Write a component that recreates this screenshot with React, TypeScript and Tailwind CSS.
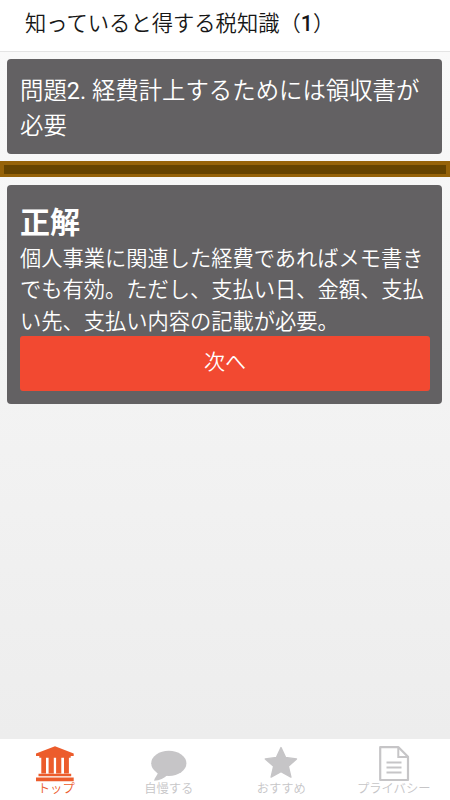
import React, { useState } from "react";

interface Tab {
  label: string;
  icon: React.ReactNode;
}

const tabs: Tab[] = [
  {
    label: "トップ",
    icon: (
      <svg width="40" height="36" viewBox="0 0 40 36" fill="currentColor">
        <path d="M19 0.2 37.7 7.6V10H34.7V11.7H3.3V10H0V7.6Z" />
        <path d="M5.3 11h4.7v16.5h-4.7zM12.6 11h5.2v16.5h-5.2zM20.1 11h5.2v16.5h-5.2zM28 11h4.9v16.5h-4.9z" />
        <path d="M2.5 27.7h32.7v2.5H2.5zM0 31.5h37.7v3.7H0z" />
      </svg>
    ),
  },
  {
    label: "自慢する",
    icon: (
      <svg width="40" height="36" viewBox="0 0 40 36" fill="currentColor">
        <ellipse cx="19.8" cy="17.3" rx="17.6" ry="12.6" />
        <path d="M9 26C8.500 29.500 5.500 31.500 5 34.800 11 34.300 15 32.300 18.500 29Z" />
      </svg>
    ),
  },
  {
    label: "おすすめ",
    icon: (
      <svg width="40" height="36" viewBox="0 0 40 36" fill="currentColor">
        <path
          d="M20 1.6 24.5 11.4 35.5 12.9 27.4 20.3 29.9 31.1 20 25.7 10.1 31.1 12.6 20.3 4.3 12.9 15.500 11.400Z"
          stroke="currentColor"
          strokeWidth="1.4"
          strokeLinejoin="round"
        />
      </svg>
    ),
  },
  {
    label: "プライバシー",
    icon: (
      <svg width="40" height="36" viewBox="0 0 40 36" fill="none" stroke="currentColor">
        <path d="M6.2 1.2H24.5L34 10.7V34H6.2Z" strokeWidth="2.2" strokeLinejoin="round" />
        <path d="M24.3 1.2V11H34" strokeWidth="2" />
        <path d="M12.5 16.5H27.5M12.5 21.5H27.5M12.5 26.5H27.5" strokeWidth="2.2" />
      </svg>
    ),
  },
];

const App = () => {
  const [activeTab, setActiveTab] = useState(0);

  return (
    <div className="flex flex-col h-[800px] w-[450px] overflow-hidden bg-white font-['Roboto','Noto_Sans_CJK_JP',sans-serif]">
      <header className="h-[52px] shrink-0 border-b border-[#e4e4e4] bg-white pl-[25px]">
        <h1 className="text-[21.3px] leading-[48px] font-[350] whitespace-nowrap text-[#171717]">
          知っていると得する税知識（<span className="font-medium">1</span>）
        </h1>
      </header>

      <main className="flex-1 bg-linear-to-b from-[#f9f9f9] to-[#ededed] pt-[7px]">
        <section className="ml-[7px] h-[95px] w-[435px] rounded-[4px] bg-[#636163] px-[13px] pt-[15px] text-[23.4px] leading-[35px] font-[350] text-white">
          <p className="whitespace-nowrap">
            問題<span className="font-normal">2. </span>経費計上するためには領収書が
            <br />
            必要
          </p>
        </section>

        <div className="mt-[7px] h-[16px] border-[4px] border-b-[3px] border-[#966309] bg-[#664400]"></div>

        <section className="mt-[8px] ml-[7px] h-[219px] w-[435px] rounded-[4px] bg-[#636163] pt-[17px] pr-[12px] pl-[13px] text-white">
          <h2 className="text-[30px] leading-[41px] font-bold">正解</h2>
          <p className="h-[93px] text-[21.25px] leading-[31.4px] font-[350] whitespace-nowrap">
            個人事業に関連した経費であればメモ書き
            <br />
            でも有効。ただし、支払い日、金額、支払
            <br />
            い先、支払い内容の記載が必要。
          </p>
          <button className="block h-[55px] w-full rounded-[3px] bg-[#f24931] pb-px text-[21px] font-[350]">
            次へ
          </button>
        </section>
      </main>

      <nav className="grid h-[61px] shrink-0 grid-cols-4 bg-white">
        {tabs.map((tab, index) => (
          <button
            key={tab.label}
            onClick={() => setActiveTab(index)}
            className={`flex flex-col items-center pt-[7px] ${
              index === activeTab ? "text-[#ec5c2c]" : "text-[#c6c5c7]"
            }`}
          >
            {tab.icon}
            <span className="pt-px text-[12.3px] leading-[12px] font-[350] whitespace-nowrap">{tab.label}</span>
          </button>
        ))}
      </nav>
    </div>
  );
};

export default App;
